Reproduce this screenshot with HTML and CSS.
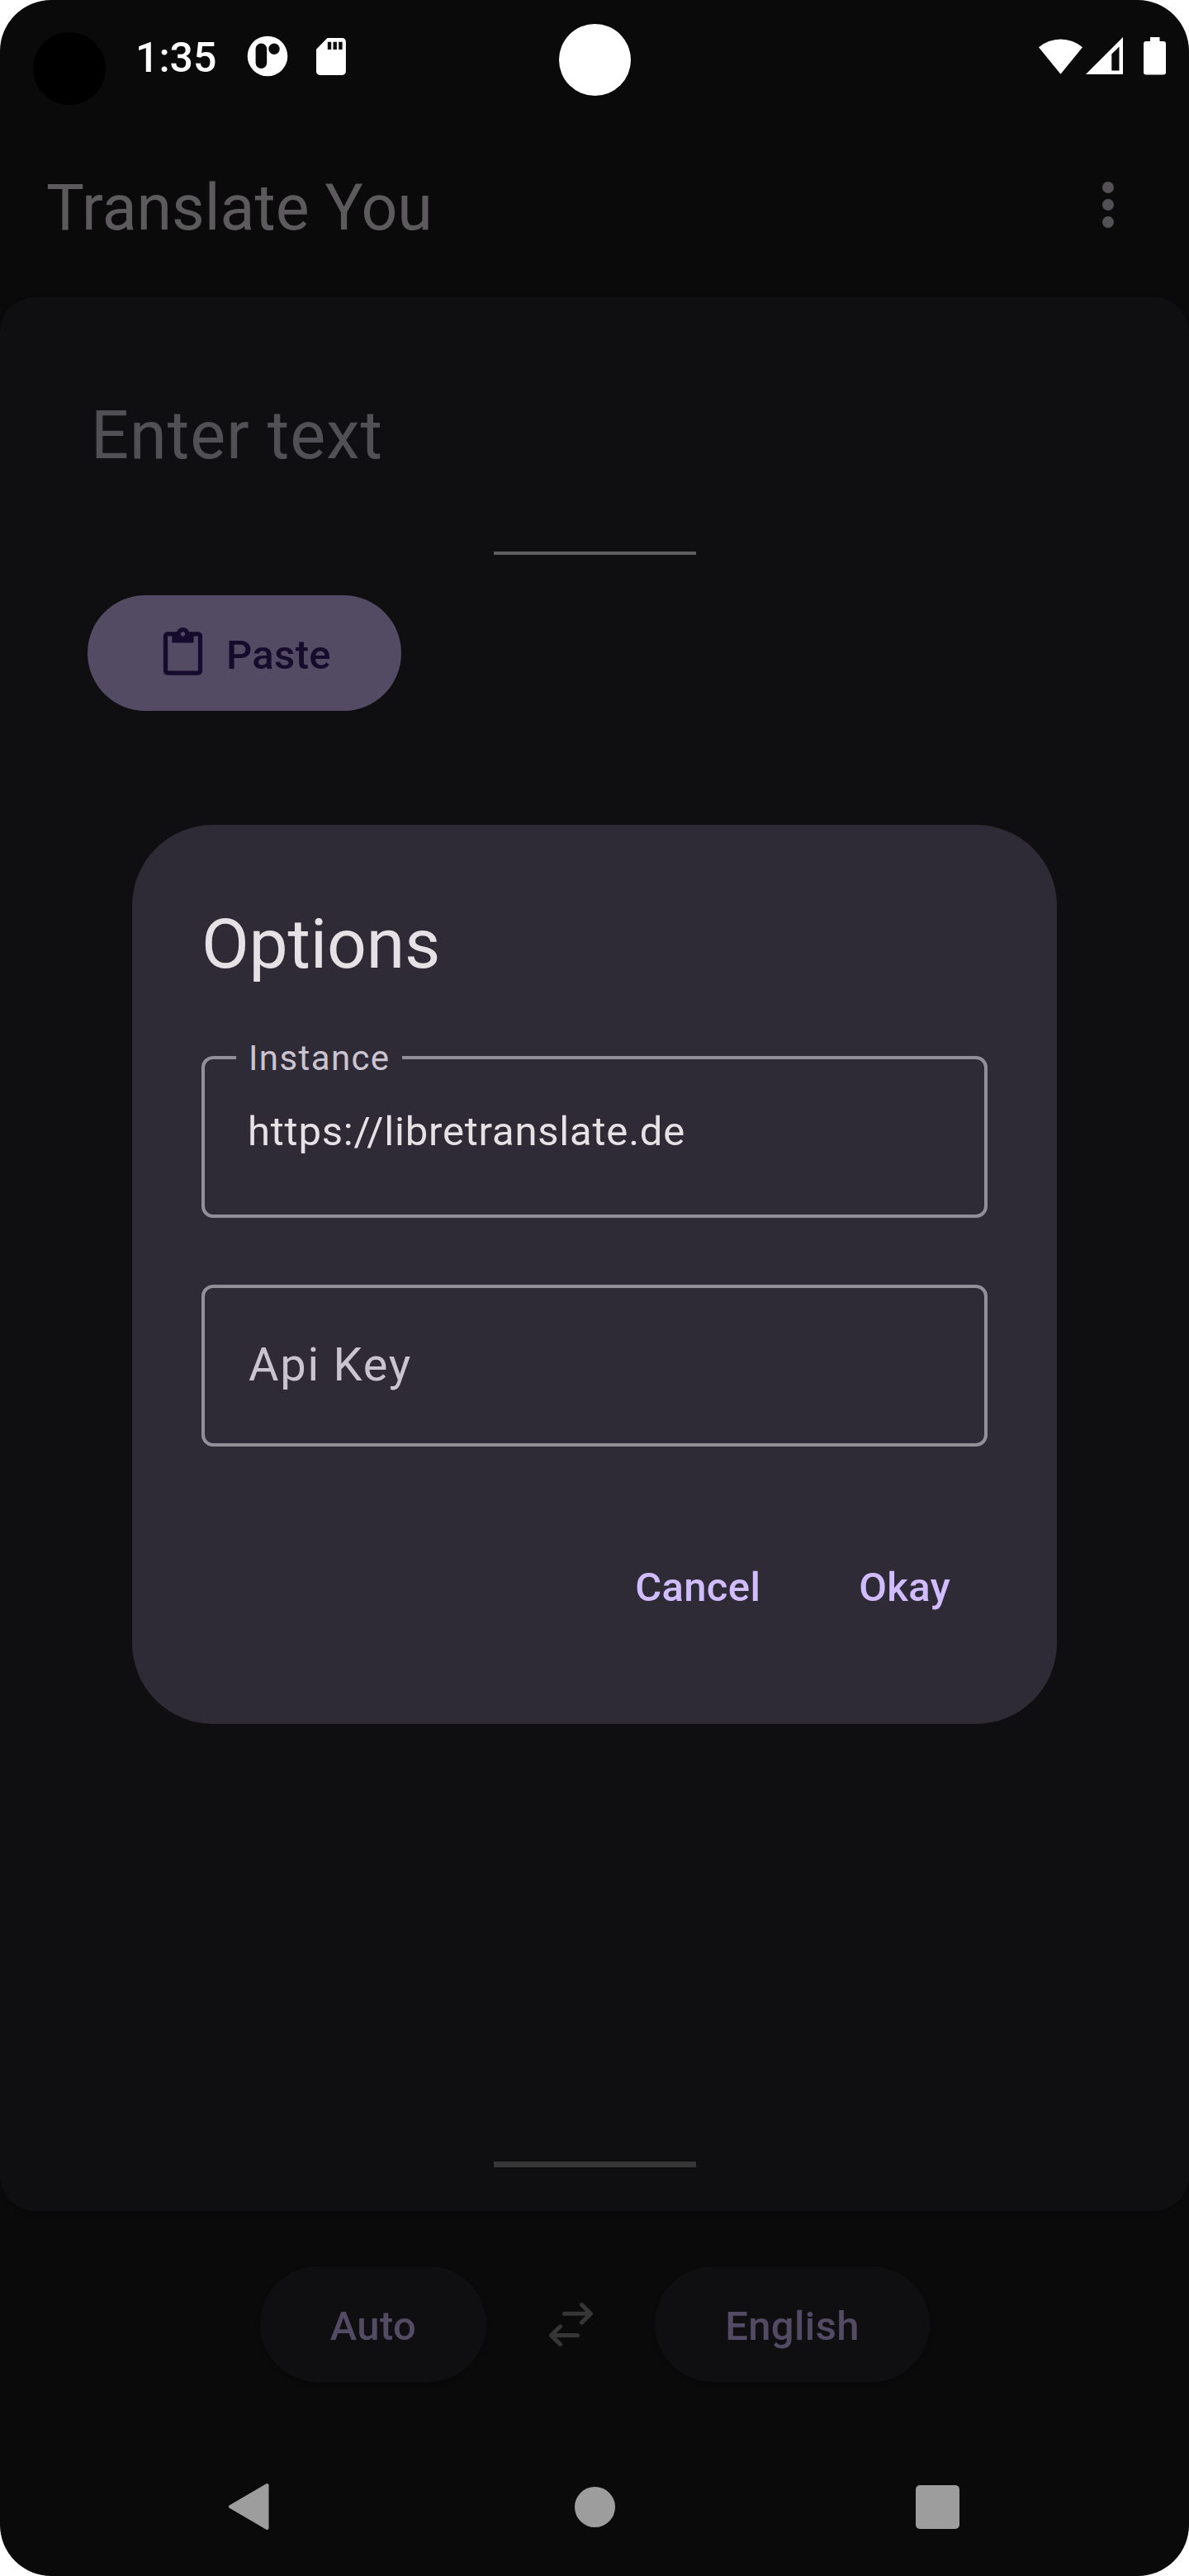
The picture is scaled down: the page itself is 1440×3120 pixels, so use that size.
FILE: index.html
```html
<!DOCTYPE html>
<html lang="en">
<head>
<meta charset="utf-8">
<title>Translate You</title>
<link rel="stylesheet" href="styles.css">
</head>
<body>
<div class="phone">
  <header class="status">
    <div class="status-left">
      <span class="lens"></span>
      <span class="clock">1:35</span>
      <svg class="app-icon" viewBox="0 0 50 50"><path fill="#fff" fill-rule="evenodd" d="M25 .7a24.3 24.3 0 1 1 0 48.600a24.300 24.300 0 0 1 0-48.600zM17.400 9.500a6.800 6.800 0 0 0-6.800 6.800v17a6.800 6.800 0 0 0 13.600 0v-17a6.800 6.800 0 0 0-6.800-6.800zM33 9.500a6.700 6.700 0 1 0 0 13.400a6.700 6.700 0 0 0 0-13.400z"/></svg>
      <svg class="sd-icon" viewBox="0 0 36 45"><path fill="#fff" fill-rule="evenodd" d="M13.500 0H31.500a4.400 4.400 0 0 1 4.400 4.400V40.500a4.400 4.400 0 0 1-4.400 4.400H4.400A4.400 4.400 0 0 1 0 40.500V13.800zM13.800 4.800v9.200h4.400v-9.200zM20.500 4.800v9.200h4.400v-9.200zM27.200 4.800v9.200h4.400v-9.200z"/></svg>
    </div>
    <span class="camera"></span>
    <div class="status-right">
      <svg class="wifi" viewBox="0 0 54 45"><path fill="#fff" d="M0 12.300A41 41 0 0 1 53 12.300L26.500 44.700z"/></svg>
      <svg class="signal" viewBox="0 0 45 45"><path fill="#fff" fill-rule="evenodd" d="M45 0V45H0zM40.500 11.500L31.300 20.500V40.500H40.500z"/></svg>
      <svg class="battery" viewBox="0 0 27 46"><path fill="#fff" d="M8 0H19.500V5H24a3 3 0 0 1 3 3V42.500a3 3 0 0 1-3 3H3a3 3 0 0 1-3-3V8a3 3 0 0 1 3-3H8z"/></svg>
    </div>
  </header>

  <div class="appbar">
    <h1 class="title">Translate You</h1>
    <svg class="more" viewBox="0 0 14 56"><circle cx="7" cy="7" r="7"/><circle cx="7" cy="28" r="7"/><circle cx="7" cy="49" r="7"/></svg>
  </div>

  <main class="card">
    <div class="placeholder">Enter text</div>
    <div class="divider"></div>
    <button class="paste">
      <svg class="paste-icon" viewBox="0 0 24 24"><path d="M19 2h-4.180C14.400.840 13.300 0 12 0c-1.300 0-2.400.840-2.820 2H5c-1.100 0-2 .9-2 2v16c0 1.100.9 2 2 2h14c1.100 0 2-.9 2-2V4c0-1.100-.9-2-2-2zm-7 0c.550 0 1 .450 1 1s-.450 1-1 1-1-.450-1-1 .450-1 1-1zm7 18H5V4h2v3h10V4h2v16z"/></svg>
      <span>Paste</span>
    </button>
    <div class="handle"></div>
  </main>

  <div class="languages">
    <button class="lang auto">Auto</button>
    <svg class="swap" viewBox="0 0 54 54"><path d="M19.500 14.300H51M40.500 3.500L51.500 14.300L40.500 25.100M35.500 40.600H4M14.500 29.800L3.500 40.600L14.500 51.400"/></svg>
    <button class="lang english">English</button>
  </div>

  <nav class="navbar">
    <svg class="back" viewBox="0 0 50 58"><path d="M47.500 3V55L3 29z"/></svg>
    <span class="home"></span>
    <span class="recents"></span>
  </nav>

  <section class="dialog">
    <h2 class="dialog-title">Options</h2>
    <div class="field filled">
      <span class="label">Instance</span>
      <span class="value">https://libretranslate.de</span>
    </div>
    <div class="field">
      <span class="hint">Api Key</span>
    </div>
    <div class="actions">
      <button class="action">Cancel</button>
      <button class="action">Okay</button>
    </div>
  </section>
</div>
</body>
</html>
```
FILE: styles.css
```css
* { box-sizing: border-box; }
body { margin: 0; background: #fff; font-family: Roboto, "Liberation Sans", sans-serif; }
button { border: 0; margin: 0; font: inherit; background: none; white-space: nowrap; }
h1, h2 { margin: 0; font-weight: 400; }
svg { display: block; flex: none; }

.phone {
  position: relative;
  display: flex;
  flex-direction: column;
  width: 1440px;
  height: 3120px;
  border-radius: 62px;
  overflow: hidden;
  background: #0a0a0a;
}

.status { position: relative; display: flex; justify-content: space-between; height: 145px; padding: 39px 28px 0 40px; }
.status-left, .status-right { display: flex; align-items: flex-start; }
.lens { width: 88px; height: 88px; border-radius: 50%; background: #000; }
.clock { width: 133px; margin-left: 36px; padding-top: 2px; font-size: 50px; line-height: 58px; font-weight: 500; color: #fff; }
.app-icon { width: 50px; height: 50px; margin: 4px 0 0 2px; }
.sd-icon { width: 36px; height: 45px; margin: 7px 0 0 34px; }
.camera { position: absolute; left: 677px; top: 29px; width: 87px; height: 87px; border-radius: 50%; background: #fff; }
.status-right { padding-top: 6px; }
.wifi { width: 54px; height: 45px; }
.signal { width: 45px; height: 45px; margin-left: 3px; }
.battery { width: 27px; height: 46px; margin-left: 25px; }

.appbar { display: flex; justify-content: space-between; height: 215px; padding: 55px 91px 0 56px; }
.title { padding-top: 3px; font-size: 77px; line-height: 98px; color: #5c5a5d; }
.more { width: 14px; height: 56px; margin-top: 20px; fill: #535156; }

.card {
  display: flex;
  flex-direction: column;
  align-items: flex-start;
  height: 2318px;
  padding: 119px 0 53px;
  border-radius: 42px;
  background: #0f0f11;
  box-shadow: 0 3px 7px rgba(0, 0, 0, .2);
}
.placeholder { padding-left: 110px; font-size: 81px; line-height: 98px; letter-spacing: 1px; color: #515055; }
.divider { align-self: center; width: 245px; height: 4px; margin-top: 91px; background: #5e5d5f; }
.paste {
  display: flex;
  align-items: center;
  width: 380px;
  height: 140px;
  margin: 49px 0 0 106px;
  padding: 0 0 0 84px;
  border-radius: 70px;
  background: #534a64;
  color: #160a2d;
  font-size: 49px;
  font-weight: 500;
  letter-spacing: .35px;
}
.paste-icon { width: 63px; height: 63px; margin-right: 21px; fill: #160a2d; }
.paste span { padding-top: 5px; }
.handle { align-self: center; width: 245px; height: 7px; margin-top: auto; background: #363636; }

.languages { display: flex; align-items: center; height: 140px; margin-top: 67px; padding-left: 315px; }
.lang { height: 140px; padding: 5px 0 0; border-radius: 70px; background: #0f0f11; color: #534a64; font-size: 49px; font-weight: 500; letter-spacing: .35px; box-shadow: 0 3px 5px rgba(0, 0, 0, .2); }
.auto { width: 274px; }
.english { width: 333px; }
.swap { width: 54px; height: 54px; margin: 0 75px; fill: none; stroke: #363636; stroke-width: 5; stroke-linecap: round; stroke-linejoin: round; }

.navbar { display: flex; align-items: center; height: 100px; margin-top: 101px; padding-left: 276px; }
.back { width: 50px; height: 58px; fill: #9d9d9d; stroke: #9d9d9d; stroke-width: 4; stroke-linejoin: round; }
.home { width: 49px; height: 49px; margin-left: 370px; border-radius: 50%; background: #9d9d9d; }
.recents { width: 53px; height: 53px; margin-left: 364px; border-radius: 5px; background: #9d9d9d; }

.dialog {
  position: absolute;
  left: 160px;
  top: 999px;
  display: flex;
  flex-direction: column;
  width: 1120px;
  height: 1089px;
  padding: 89px 84px 84px;
  border-radius: 98px;
  background: #2f2b36;
}
.dialog-title { margin-bottom: 79px; font-size: 84px; line-height: 112px; letter-spacing: -.2px; color: #e6e1e5; }
.field { position: relative; flex: none; display: flex; align-items: center; height: 196px; padding: 0 53px; margin-bottom: 81px; border: 4px solid #938f99; border-radius: 14px; }
.label { position: absolute; left: 38px; top: -26px; width: 201px; padding-left: 15px; background: #2f2b36; font-size: 42px; line-height: 49px; letter-spacing: 1.4px; color: #cac4d0; white-space: nowrap; }
.value { margin: -13px 0 0 -1px; font-size: 49px; line-height: 58px; letter-spacing: .8px; color: #e6e1e5; }
.hint { margin-top: -3px; font-size: 56px; letter-spacing: 1.75px; color: #cac4d0; }
.actions { display: flex; justify-content: flex-end; gap: 35px; margin-top: 18px; padding-right: 3px; }
.action { height: 140px; padding: 3px 42px 0; font-size: 49px; font-weight: 500; letter-spacing: .35px; color: #d0bcff; }
```
